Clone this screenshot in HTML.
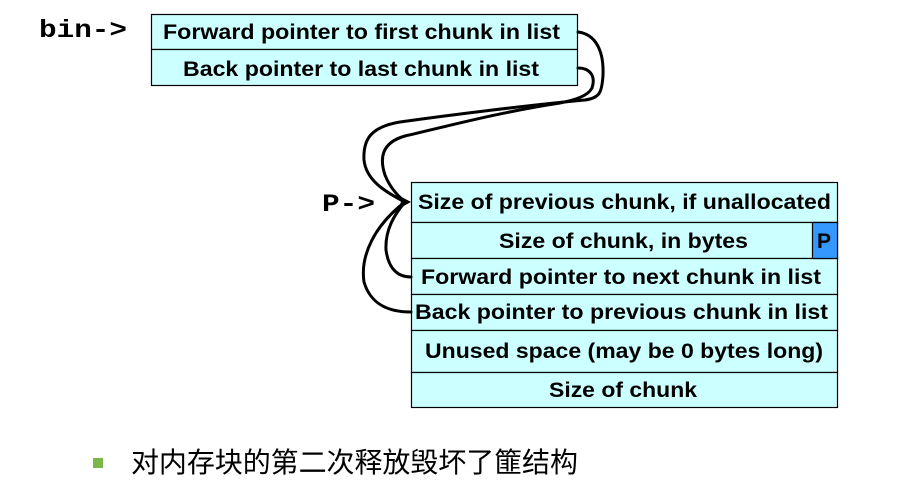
<!DOCTYPE html>
<html><head><meta charset="utf-8"><style>
html,body{margin:0;padding:0;background:#fff;width:903px;height:496px;overflow:hidden}
svg{display:block}
.t{font-family:"Liberation Sans",Arial,sans-serif;font-weight:bold;font-size:21px;fill:#000}
.m{font-family:"Liberation Mono",monospace;font-weight:bold;font-size:25px}
</style></head><body>
<svg width="903" height="496" viewBox="0 0 903 496">
<g fill="#ccffff" stroke="#000" stroke-width="1.2">
<rect x="151.5" y="14.5" width="426" height="35"/>
<rect x="151.5" y="49.5" width="426" height="36"/>
<rect x="411.5" y="182.5" width="426" height="40"/>
<rect x="411.5" y="222.5" width="426" height="36"/>
<rect x="411.5" y="258.5" width="426" height="36"/>
<rect x="411.5" y="294.5" width="426" height="36"/>
<rect x="411.5" y="330.5" width="426" height="42"/>
<rect x="411.5" y="372.5" width="426" height="35"/>
<rect x="812.5" y="222.5" width="25" height="36" fill="#3399ff"/>
</g>
<g class="t" lengthAdjust="spacingAndGlyphs">
<text x="163" y="39" textLength="397" lengthAdjust="spacingAndGlyphs">Forward pointer to first chunk in list</text>
<text x="183" y="76" textLength="356" lengthAdjust="spacingAndGlyphs">Back pointer to last chunk in list</text>
<text x="418" y="209" textLength="413" lengthAdjust="spacingAndGlyphs">Size of previous chunk, if unallocated</text>
<text x="499" y="248" textLength="249" lengthAdjust="spacingAndGlyphs">Size of chunk, in bytes</text>
<text x="817" y="248">P</text>
<text x="421" y="284" textLength="400" lengthAdjust="spacingAndGlyphs">Forward pointer to next chunk in list</text>
<text x="415" y="319" textLength="413" lengthAdjust="spacingAndGlyphs">Back pointer to previous chunk in list</text>
<text x="425" y="358" textLength="398" lengthAdjust="spacingAndGlyphs">Unused space (may be 0 bytes long)</text>
<text x="549" y="397" textLength="148" lengthAdjust="spacingAndGlyphs">Size of chunk</text>
</g>
<text class="m" x="39" y="37" textLength="88" lengthAdjust="spacingAndGlyphs">bin-&gt;</text>
<text class="m" x="322" y="211" textLength="53" lengthAdjust="spacingAndGlyphs">P-&gt;</text>
<g fill="none" stroke="#000" stroke-width="3" stroke-linecap="round">
<path d="M578 32 C595 34 604 50 603 75 C602 92 600 98 585 100 C530 105 450 115 400 122 C370 127 363 140 364 160 C366 180 385 192 405 202"/>
<path d="M578 68 C590 68 596 76 592 88 C588 96 575 100 560 103 C500 112 440 128 405 136 C380 143 380 160 385 175 C390 188 398 196 405 202"/>
<path d="M411 277 C395 277 388 265 386 250 C385 230 394 215 405 202"/>
<path d="M411 312 C385 312 370 302 364 282 C360 255 375 225 405 202"/>
</g>
<path d="M411 202 L398 195 L401 202 L398 209 Z" fill="#000"/>
<rect x="93" y="458" width="10" height="10" fill="#7ab648"/>
<text x="131" y="472" style="font-family:'Liberation Sans','Noto Sans CJK SC',sans-serif;font-size:28px" textLength="447">对内存块的第二次释放毁坏了篚结构</text>
</svg>
</body></html>
